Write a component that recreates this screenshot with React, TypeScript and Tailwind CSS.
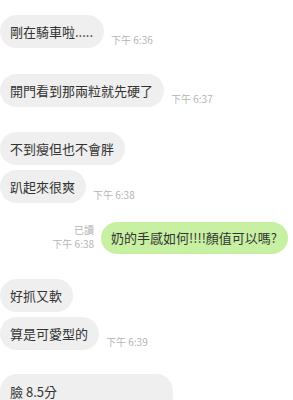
const font = { fontFamily: '"Noto Sans CJK TC", "Noto Sans", sans-serif' }

const Time = ({ t }: { t: string }) => (
  <span className="ml-[7px] mb-[3px] text-[10px] leading-none text-[#b4b4b4]">{t}</span>
)

const Left = ({ text, time, className = '' }: { text: string; time?: string; className?: string }) => (
  <div className={`flex items-end ${className}`}>
    <div className="flex h-[33px] items-center rounded-[17px] bg-[#efefef] pl-[10px] pr-[11px] text-[13px] text-[#333]">
      {text}
    </div>
    {time && <Time t={time} />}
  </div>
)

export default function App() {
  return (
    <div className="h-[400px] w-[293px] overflow-hidden bg-white pt-[15px]" style={font}>
      <Left text="剛在騎車啦....." time="下午 6:36" />
      <Left text="開門看到那兩粒就先硬了" time="下午 6:37" className="mt-[26px]" />
      <Left text="不到瘦但也不會胖" className="mt-[25px]" />
      <Left text="趴起來很爽" time="下午 6:38" className="mt-[5px]" />

      <div className="mt-[19px] flex items-end justify-end pr-[5px]">
        <div className="mr-[7px] mb-[3px] flex flex-col items-end text-[10px] leading-[14px] text-[#b4b4b4]">
          <span>已讀</span>
          <span>下午 6:38</span>
        </div>
        <div className="flex h-[32px] items-center rounded-[17px] bg-[#c7f0a2] pl-[10px] pr-[11px] text-[13px] text-[#333]">
          奶的手感如何!!!!顏值可以嗎?
        </div>
      </div>

      <Left text="好抓又軟" className="mt-[25px]" />
      <Left text="算是可愛型的" time="下午 6:39" className="mt-[5px]" />

      <div className="mt-[24px] flex">
        <div className="w-[173px] rounded-[17px] bg-[#efefef] pl-[10px] pt-[8px] pb-[20px] text-[13px] leading-[20px] text-[#333]">
          臉 8.5分
        </div>
      </div>
    </div>
  )
}
